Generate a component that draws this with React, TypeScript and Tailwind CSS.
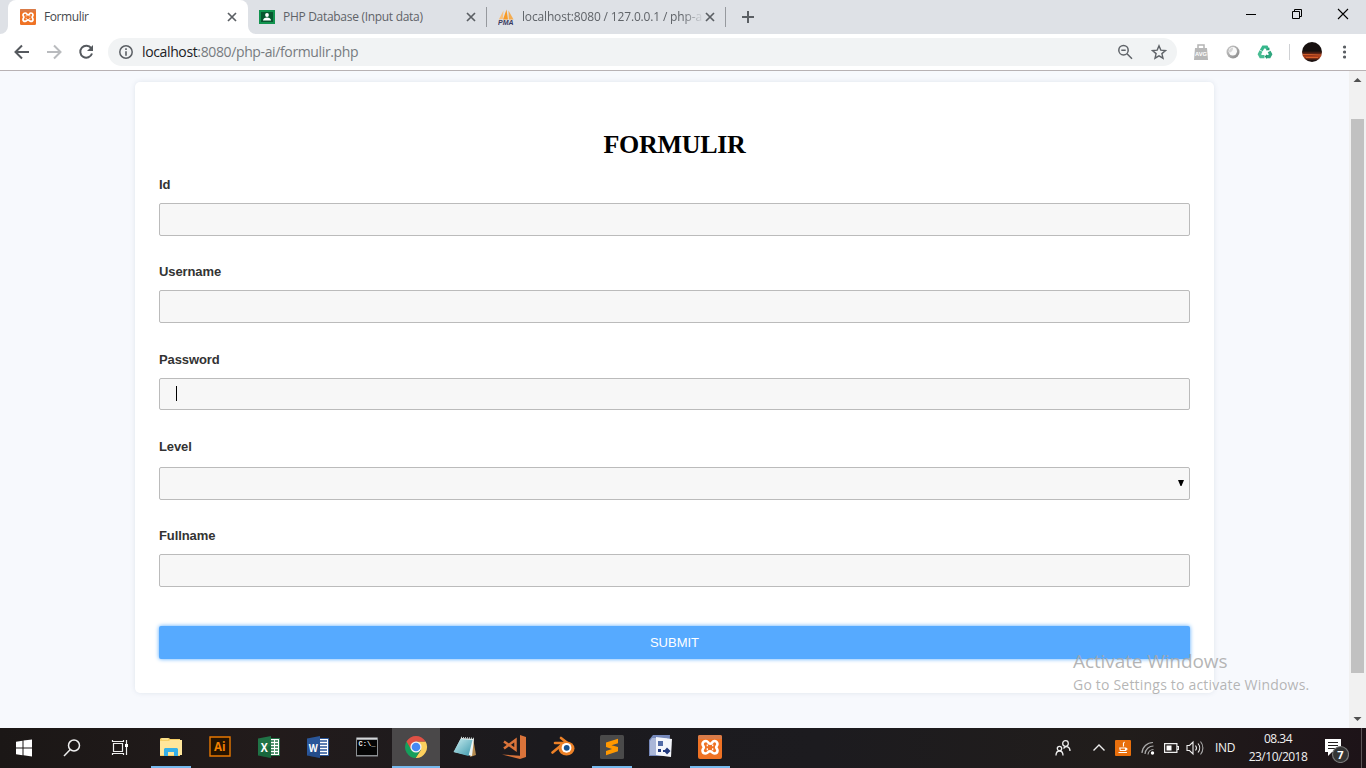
import React from "react";

const UI = "font-['Open_Sans','Noto_Sans',sans-serif]";

function Xampp({ size }: { size: number }) {
  return (
    <svg width={size} height={size} viewBox="0 0 24 24">
      <rect width="24" height="24" rx="2" fill="#ef7224" />
      <path d="M0 2a2 2 0 0 1 2-2h20a2 2 0 0 1 2 2v2H0z" fill="#d97b48" />
      <path
        d="M8 6C5.800 6 4.500 7.300 4.500 9c0 1.600 1.300 2.200 1.300 3.200S4.500 14 4.500 15.600c0 1.700 1.300 2.900 3.200 2.900 2 0 2.300-2.200 4.300-2.200s2.300 2.200 4.300 2.200c1.900 0 3.200-1.200 3.200-2.900 0-1.600-1.300-2.400-1.300-3.400s1.300-1.600 1.300-3.200c0-1.700-1.300-3-3.200-3-2.200 0-2 2.800-4 2.800S10.200 6 8 6z"
        fill="none"
        stroke="#fff"
        strokeWidth="2.600"
        strokeLinejoin="round"
      />
      <path d="M9.300 9.500v1.700M14.700 9.500v1.700M9.300 13.300v2M14.700 13.300v2" stroke="#fff" strokeWidth="1.300" />
    </svg>
  );
}

function Close() {
  return (
    <svg width="10" height="10" viewBox="0 0 10 10">
      <path d="M1 1l8 8M9 1L1 9" stroke="#5b5f64" strokeWidth="1.700" />
    </svg>
  );
}

function TabStrip() {
  return (
    <div className={`${UI} flex h-[34px] bg-[#dee1e6] text-[12px] leading-[34px] text-[#5f6368]`}>
      <svg className="self-end" width="8" height="8"><path d="M8 0v8H0a8 8 0 0 0 8-8z" fill="#fff" /></svg>
      <div className="flex w-[240px] items-center rounded-t-lg bg-white pl-3 pr-[11px] text-[#45494d]">
        <Xampp size={16} />
        <span className="ml-2 grow tracking-[-0.400px]">Formulir</span>
        <Close />
      </div>
      <svg className="self-end" width="8" height="8"><path d="M0 0v8h8a8 8 0 0 1-8-8z" fill="#fff" /></svg>
      <div className="flex w-[230px] items-center pl-[3px] pr-[10px]">
        <svg width="16" height="16" viewBox="0 0 16 16">
          <path d="M0 1h16v14H0z" fill="#12934f" />
          <path d="M2 3h12v10H2z" fill="#07572f" />
          <circle cx="8" cy="6" r="1.900" fill="#fff" />
          <path d="M4 11.500c0-2 2-3 4-3s4 1 4 3z" fill="#fff" />
        </svg>
        <span className="ml-2 grow whitespace-nowrap tracking-[-0.300px]">PHP Database (Input data)</span>
        <Close />
      </div>
      <div className="my-[7px] w-px bg-[#96999e]" />
      <div className="flex w-[238px] items-center pl-[11px] pr-[10px]">
        <svg width="16" height="16" viewBox="0 0 16 16">
          <path d="M5.500 1.500L.8 10.500l4-.5z" fill="#f9c07a" />
          <path d="M8.500 .5L5 10.500h5z" fill="#f79a26" />
          <path d="M10.500 1.500l.3 9h4.700z" fill="#f4ac50" />
          <text x="0" y="15.500" textLength="15.500" lengthAdjust="spacingAndGlyphs" fontSize="6.500" fontWeight="bold" fontStyle="italic" fontFamily="Liberation Sans" fill="#39395f">PMA</text>
        </svg>
        <span className="ml-2 whitespace-nowrap tracking-[-0.160px] [mask-image:linear-gradient(to_right,#000_160px,transparent_182px)]">localhost:8080 / 127.0.0.1 / php-a</span>
        <span className="ml-auto"><Close /></span>
      </div>
      <div className="my-[7px] w-px bg-[#96999e]" />
      <svg className="ml-4 self-center" width="12" height="12"><path d="M6 0v12M0 6h12" stroke="#5b5f64" strokeWidth="2" /></svg>
      <div className="ml-auto flex h-7 items-center">
        <svg width="46" height="28"><path d="M18 14.500h10" stroke="#000" /></svg>
        <svg width="46" height="28" fill="none" stroke="#000"><path d="M18.500 11.500h7v7h-7zM20.500 11.500v-2h7v7h-2" /></svg>
        <svg width="46" height="28"><path d="M18 9l10 10M28 9L18 19" stroke="#000" strokeWidth="1.100" /></svg>
      </div>
    </div>
  );
}

function Toolbar() {
  return (
    <div className="flex h-[37px] items-center border-b border-[#b8b2b4] bg-white">
      <div className="flex w-[108px] pl-[13px]">
        <svg width="18" height="18" viewBox="0 0 18 18" fill="none" stroke="#55595e" strokeWidth="2"><path d="M16 9H3M9 2.500L2.500 9 9 15.500" /></svg>
        <svg className="ml-[14px]" width="18" height="18" viewBox="0 0 18 18" fill="none" stroke="#b9bbbe" strokeWidth="2"><path d="M2 9h13M9 2.500L15.500 9 9 15.500" /></svg>
        <svg className="ml-[14px]" width="18" height="18" viewBox="0 0 18 18" fill="none" stroke="#55595e" strokeWidth="2"><path d="M14.200 5.200A6 6 0 1 0 15 10.500" /><path d="M16 2v6H10z" fill="#55595e" stroke="none" /></svg>
      </div>
      <div className={`${UI} flex h-7 w-[1069px] items-center rounded-full bg-[#f1f3f4] pl-[11px] text-[14px]`}>
        <svg width="14" height="14" viewBox="0 0 14 14"><circle cx="7" cy="7" r="6.200" fill="none" stroke="#5b5f64" strokeWidth="1.500" /><path d="M6.200 3.300h1.600v1.600H6.200zM6.200 6.200h1.600v4.500H6.200z" fill="#5b5f64" /></svg>
        <span className="mb-px ml-[9px] grow tracking-[-0.370px] text-[#777b80]"><span className="text-[#202124]">localhost</span>:8080/php-ai/formulir.php</span>
        <svg width="16" height="16" viewBox="0 0 16 16" fill="none" stroke="#5f6368" strokeWidth="1.500"><circle cx="6.500" cy="6.200" r="4.700" /><path d="M10 9.700l5 5M4.300 6.200h4.400" /></svg>
        <svg className="ml-[18px] mr-[10px]" width="16" height="16" viewBox="0 0 16 16"><path d="M8 1.800l1.800 4.300 4.700.4-3.600 3.100 1.100 4.600L8 11.800l-4 2.400 1.100-4.600L1.500 6.500l4.700-.4z" fill="none" stroke="#5f6368" strokeWidth="1.400" /></svg>
      </div>
      <svg className="ml-4" width="16" height="16" viewBox="0 0 16 16">
        <path d="M5 4V1h6v3" fill="none" stroke="#b4b4b4" strokeWidth="1.500" />
        <path d="M2 4h12l1 12H1z" fill="#b8b8b8" />
        <text x="2" y="12" textLength="12" lengthAdjust="spacingAndGlyphs" fontSize="6" fontWeight="bold" fontFamily="Liberation Sans" fill="#fff">AVG</text>
      </svg>
      <svg className="ml-4" width="16" height="16" viewBox="0 0 16 16">
        <defs><linearGradient id="ring" x1="0" y1="0" x2="1" y2="1"><stop offset="0" stopColor="#ccc" /><stop offset="1" stopColor="#858585" /></linearGradient></defs>
        <circle cx="8" cy="8" r="6.500" fill="url(#ring)" /><circle cx="7.800" cy="7.300" r="4.200" fill="#fafafa" /><path d="M8 3.500a4.300 4.300 0 0 1-4 5 4.300 4.300 0 0 1 4-5z" fill="#d5d5d5" />
      </svg>
      <svg className="ml-4" width="16" height="16" viewBox="0 0 16 16" fill="none" strokeWidth="3.200">
        <path d="M4.300 6.500L6.300 3h3.200l1.500 2.700" stroke="#36b78c" />
        <path d="M12.100 7.500l1.500 2.700-1.300 2.400H9.500" stroke="#2fa67e" />
        <path d="M7.500 12.600H3.700L2.400 10.200 4 7" stroke="#49bd93" />
        <path d="M9.300 6.300l3.200-.1-.2-2.800zM10 10.300v4.700l-2.400-2.400z" fill="#23976f" stroke="none" />
      </svg>
      <div className="ml-4 h-4 w-px bg-[#cfd1d4]" />
      <svg className="ml-3" width="20" height="20" viewBox="0 0 20 20">
        <defs>
          <clipPath id="avatar"><circle cx="10" cy="10" r="10" /></clipPath>
          <linearGradient id="dusk" x1="0" y1="0" x2="0" y2="1"><stop offset=".45" stopColor="#17100f" /><stop offset=".65" stopColor="#8a321a" /><stop offset=".75" stopColor="#b8431c" /><stop offset=".92" stopColor="#1d1211" /></linearGradient>
        </defs>
        <g clipPath="url(#avatar)"><path d="M0 0h20v20H0z" fill="url(#dusk)" /><path d="M1 12.500h8l10 .5M4 15.500h12" stroke="#e86a2e" strokeWidth=".8" /></g>
      </svg>
      <svg className="ml-5" width="4" height="14" fill="#5b5f64"><circle cx="2.500" cy="2" r="1.600" /><circle cx="2.500" cy="7" r="1.600" /><circle cx="2.500" cy="12" r="1.600" /></svg>
    </div>
  );
}

const field = "w-full rounded-[2px] border border-[#bbb] bg-[#f7f7f7]";

function Page() {
  return (
    <div className="flex h-[657px] bg-[#f7f9fd]">
      <div className="w-[1349px] pl-[135px] pt-[11px]">
        <div className="flex h-[611px] w-[1079px] flex-col rounded-[5px] bg-white px-6 pt-[48px] font-['Liberation_Sans',sans-serif] text-[13px] leading-5 text-[#333] shadow-[0_0_5px_rgba(60,90,120,0.130)]">
          <h1 className="h-[45px] text-center font-['Liberation_Serif',serif] text-[26px] font-bold leading-[30px] tracking-[-0.300px] text-black">FORMULIR</h1>
          <label className="font-bold tracking-[-0.100px]">Id</label>
          <div className={`${field} mt-[8px] h-[33px]`} />
          <label className="mt-[26px] font-bold tracking-[-0.100px]">Username</label>
          <div className={`${field} mt-[8px] h-[33px]`} />
          <label className="mt-[27px] font-bold tracking-[-0.100px]">Password</label>
          <div className={`${field} mt-[8px] flex h-8 items-start pl-4 pt-[7px]`}><span className="h-[15px] w-px bg-black" /></div>
          <label className="mt-[27px] font-bold tracking-[-0.100px]">Level</label>
          <div className={`${field} mt-[10px] flex h-[33px] items-center justify-end pb-[2px] pr-[5px]`}>
            <svg width="6" height="6"><path d="M0 0h6L3.500 6h-1z" fill="#000" /></svg>
          </div>
          <label className="mt-[26px] font-bold tracking-[-0.100px]">Fullname</label>
          <div className={`${field} mt-[8px] h-[33px]`} />
          <button className="mt-[39px] h-[33px] w-full rounded-[2px] bg-[#56aaff] text-white shadow-[0_0_4px_#56aaff]">SUBMIT</button>
        </div>
      </div>
      <div className="flex w-[17px] flex-col items-center bg-[#f1f1f1]">
        <svg width="17" height="17"><path d="M4.500 11h8l-4-4z" fill="#505050" /></svg>
        <div className="mt-[31px] h-[554px] w-[13px] bg-[#c1c1c1]" />
        <svg className="mt-auto" width="17" height="17"><path d="M4.500 6h8l-4 4z" fill="#505050" /></svg>
      </div>
    </div>
  );
}

function Slot({ children, open, active }: { children: React.ReactNode; open?: boolean; active?: boolean }) {
  return (
    <div className={`mr-px flex h-10 w-12 flex-col items-center ${active ? "bg-[#4a4849]" : ""}`}>
      <div className="flex h-[38px] items-center">{children}</div>
      {active ? <div className="h-[2px] w-12 bg-[#76b9ed]" /> : open ? <div className="h-[2px] w-10 bg-[#76b9ed]" /> : null}
    </div>
  );
}

function Office({ letter, color, dark, word }: { letter: string; color: string; dark: string; word?: boolean }) {
  return (
    <svg width="24" height="24" viewBox="0 0 24 24">
      <path d="M12 3.500h10.500v17H12z" fill="#fff" stroke={color} />
      {word ? (
        <path d="M14 6h7M14 9h7M14 12h7M14 15h7M14 18h7" stroke={color} strokeWidth="1.300" />
      ) : (
        <path d="M14 6h3M18 6h3M14 9h3M18 9h3M14 12h3M18 12h3M14 15h3M18 15h3M14 18h3M18 18h3" stroke={color} strokeWidth="1.500" />
      )}
      <path d="M1 3.500L14 1v22L1 20.500z" fill={color} />
      <path d="M1 20.500L14 10v13z" fill={dark} opacity=".35" />
      <text x="7.300" y="16.500" textAnchor="middle" fontSize={word ? 11 : 13} fontWeight="bold" fontFamily="Open Sans" fill="#fff" textLength={word ? 9 : 7} lengthAdjust="spacingAndGlyphs">{letter}</text>
    </svg>
  );
}

function Taskbar() {
  return (
    <div className={`${UI} flex h-10 bg-[linear-gradient(90deg,#1b1716,#221b1b_20%,#1b1a1e_40%,#1c1b1f_60%,#211d1b_82%,#1d1318)]`}>
      <div className="flex w-[147px] items-center">
        <svg width="48" height="40" fill="#fff"><path d="M16 13.700l6.500-1v6.800H16zM23.500 12.600l8.500-1.100v8H23.500zM16 20.500h6.500v6.700l-6.500-1zM23.500 20.500H32v8l-8.500-1.200z" /></svg>
        <svg width="48" height="40" fill="none" stroke="#eee" strokeWidth="1.500"><circle cx="26" cy="17.500" r="5.500" /><path d="M22.300 21.500L16 28" /></svg>
        <svg width="48" height="40" fill="none" stroke="#eee" strokeWidth="1.200"><path d="M17.500 15.500h9v8h-9zM16.500 12v1.500h11V12M16.500 27V25.500h11V27M30.500 12v15" /><path d="M29 16h3v3h-3z" fill="#fff" stroke="none" /></svg>
      </div>
      <Slot open>
        <svg width="24" height="24" viewBox="0 0 24 24"><path d="M2 3h8l1 1h10v17H1V4z" fill="#f5cf67" /><path d="M1 6h9l1-1h12v15H1z" fill="#ffe69b" /><path d="M3 4h6" stroke="#fff0b4" /><path d="M5 21v-7l1-1h12l1 1v7h-4v-4H9v4z" fill="#36b0e8" /></svg>
      </Slot>
      <Slot>
        <svg className="mb-px" width="22" height="22" viewBox="0 0 22 22"><path d="M1 1h20v19H1z" fill="#251300" stroke="#e87800" strokeWidth="1.400" /><text x="5" y="15" fontSize="12.500" fontWeight="bold" fontFamily="Open Sans" fill="#f28100" textLength="11.500" lengthAdjust="spacingAndGlyphs">Ai</text></svg>
      </Slot>
      <Slot><Office letter="X" color="#207346" dark="#0c4d2a" /></Slot>
      <Slot><Office letter="W" color="#2a5699" dark="#1a3871" word /></Slot>
      <Slot>
        <svg width="22" height="20" viewBox="0 0 22 20"><path d="M0 .5h22v19H0z" fill="#8b8f92" /><path d="M1 3h20v15H1z" fill="#050505" /><path d="M1 1.500h20" stroke="#d4d6d8" strokeWidth="1.500" /><text x="2.500" y="9" fontSize="7" fontWeight="bold" fontFamily="Liberation Mono" fill="#eee" textLength="17">C:\_</text></svg>
      </Slot>
      <Slot active>
        <svg width="24" height="24" viewBox="0 0 24 24">
          <path d="M12 12l5 3-5.500 8A11 11 0 0 0 21.600 6.600H12z" fill="#fdd05d" />
          <path d="M12 12L2.500 6.500A11 11 0 0 0 11.700 23l4.800-8.200z" fill="#159f5c" />
          <path d="M2.500 6.500A11 11 0 0 1 21.500 6.500H12l-4.700 8.200z" fill="#df5145" />
          <circle cx="12" cy="12" r="5.600" fill="#f4f4f4" /><circle cx="12" cy="12" r="4.300" fill="#4689f4" />
        </svg>
      </Slot>
      <Slot>
        <svg width="24" height="24" viewBox="0 0 24 24"><defs><linearGradient id="note" x1="0" y1="0" x2="1" y2="1"><stop stopColor="#c9edf0" /><stop offset="1" stopColor="#3b98ac" /></linearGradient></defs><path d="M20 3l3 17-6 2z" fill="#b48a4e" /><path d="M8 3l13 1-2 17L1 17z" fill="#edf4f4" /><path d="M7.500 4l12 1-4 16L.5 17z" fill="url(#note)" /><path d="M8 2.500l13 1" stroke="#c9d4d5" strokeWidth="1.500" strokeDasharray="1 1" /></svg>
      </Slot>
      <Slot>
        <svg width="24" height="24" viewBox="0 0 24 24"><path d="M18 0l6 2v20l-6 2L0 19.500l18 1.200z" fill="#d9733a" /><path d="M2 6.500l11.500 8V5L2 13.500" fill="none" stroke="#d9733a" strokeWidth="2.500" /></svg>
      </Slot>
      <Slot>
        <svg width="24" height="24" viewBox="0 0 24 24"><path d="M1.500 17.500L13 8H4M10 3l9 7" stroke="#ec8127" strokeWidth="2.600" fill="none" strokeLinecap="round" /><ellipse cx="15.500" cy="13.500" rx="8" ry="7" fill="#ec8127" /><circle cx="15.500" cy="12.800" r="4.900" fill="#fff" /><circle cx="15.700" cy="12.800" r="2.900" fill="#17528e" /></svg>
      </Slot>
      <Slot open>
        <svg width="24" height="24" viewBox="0 0 24 24"><rect width="24" height="24" rx="1.500" fill="#4a4a4a" /><path d="M6 7.500l12-3.700v4.400L11.500 10.200 18 12v4.300L6 20.200v-4.300l6-2L6 12z" fill="#ff9800" /></svg>
      </Slot>
      <Slot>
        <svg width="24" height="24" viewBox="0 0 24 24"><path d="M4 0h17l-1 21H0V5z" fill="#7689bb" /><path d="M3 3h15v17H1V6z" fill="#aab7d8" /><path d="M7 2l16 2-1 18-15-2z" fill="#f4f6fb" /><path d="M9 6h5v5H9z" fill="#526ca7" /><path d="M9 14h3v3H9zM14 15h2v2h-2zM18 12.500l3.500 3.500-3.500 3.500-3-3.500z" fill="#223a7e" /></svg>
      </Slot>
      <Slot open><Xampp size={24} /></Slot>

      <div className="ml-auto flex items-center text-[12px] text-[#f1f1f1]">
        <svg className="mr-[21px]" width="16" height="16" viewBox="0 0 16 16" fill="none" stroke="#eee" strokeWidth="1.300"><circle cx="10.500" cy="3.500" r="2.800" /><circle cx="4.500" cy="8.500" r="2.200" /><path d="M1 15.500c0-6 7-6 7 0M8.500 8.500c2.500-3.500 6.500-1.500 6.500 2.500" /></svg>
        <svg className="mr-[9px]" width="14" height="14" viewBox="0 0 14 14" fill="none" stroke="#eee" strokeWidth="1.400"><path d="M1.500 9.500L7 4l5.500 5.500" /></svg>
        <svg width="16" height="16" viewBox="0 0 16 16" fill="none"><rect width="16" height="16" rx="1" fill="#e86f0c" /><path d="M9.500 2c-3 2.500.5 2.500-1.500 4.500M4.800 8h5.700v2.500H5.300zM10.500 8c2 0 2 2 0 2M3.500 12.500h8.500" stroke="#fff" strokeWidth="1.100" /></svg>
        <svg className="ml-[10px]" width="14" height="14" viewBox="0 0 14 14" fill="none" stroke="#aaa" strokeWidth="1.200"><path d="M1 12A11 11 0 0 1 12 1.500M4 13a8.500 8.500 0 0 1 8.500-8M7 13.500a5.500 5.500 0 0 1 5.500-5" /><circle cx="11.500" cy="12" r="1.700" fill="#fff" stroke="none" /></svg>
        <svg className="ml-[9px]" width="15" height="12" viewBox="0 0 15 12"><path d="M.6 1.600h12.300v8.800H.6zM13 4.500h1.500v3H13" fill="none" stroke="#eee" strokeWidth="1.200" /><path d="M2.500 3.500h5v5h-5z" fill="#fff" /></svg>
        <svg className="ml-[7px]" width="18" height="16" viewBox="0 0 18 16" fill="none" stroke="#eee" strokeWidth="1.100"><path d="M1 5.500h2.500L7 2v12l-3.500-3.500H1zM9.500 5.500a4 4 0 0 1 0 5M12 3.500a7 7 0 0 1 0 9" /><path d="M14.500 1.500a10 10 0 0 1 0 13" stroke="#aaa" /></svg>
        <span className="ml-[11px] w-[24px] tracking-[-0.300px]">IND</span>
        <div className="ml-1 w-[70px] whitespace-nowrap text-center leading-[18px] tracking-[-0.500px]"><div>08.34</div><div>23/10/2018</div></div>
        <svg className="ml-[8px]" width="28" height="30" viewBox="0 0 28 30"><path d="M4 6h16v13h-9l-4 4v-4H4z" fill="#fff" /><path d="M7 9.500h10M7 12.500h10M7 15.500h7" stroke="#242020" /><circle cx="19.500" cy="21.500" r="8" fill="#343434" stroke="#777" strokeWidth="1.200" /><text x="19.500" y="25.500" textAnchor="middle" fontSize="11" fontWeight="bold" fontFamily="Open Sans" fill="#fff">7</text></svg>
        <div className="ml-[12px] mr-1 h-10 w-px bg-[#5b5557]" />
      </div>
    </div>
  );
}

export default function App() {
  return (
    <div className="relative h-[768px] w-[1366px] overflow-hidden">
      <TabStrip />
      <Toolbar />
      <Page />
      <Taskbar />
      <div className={`${UI} pointer-events-none absolute left-[1073px] top-[648px] whitespace-nowrap text-[#a8a8a8]/85`}>
        <div className="text-[19px] leading-[27px] tracking-[-0.100px]">Activate Windows</div>
        <div className="text-[14px] leading-[19px] tracking-[0.200px]">Go to Settings to activate Windows.</div>
      </div>
    </div>
  );
}
